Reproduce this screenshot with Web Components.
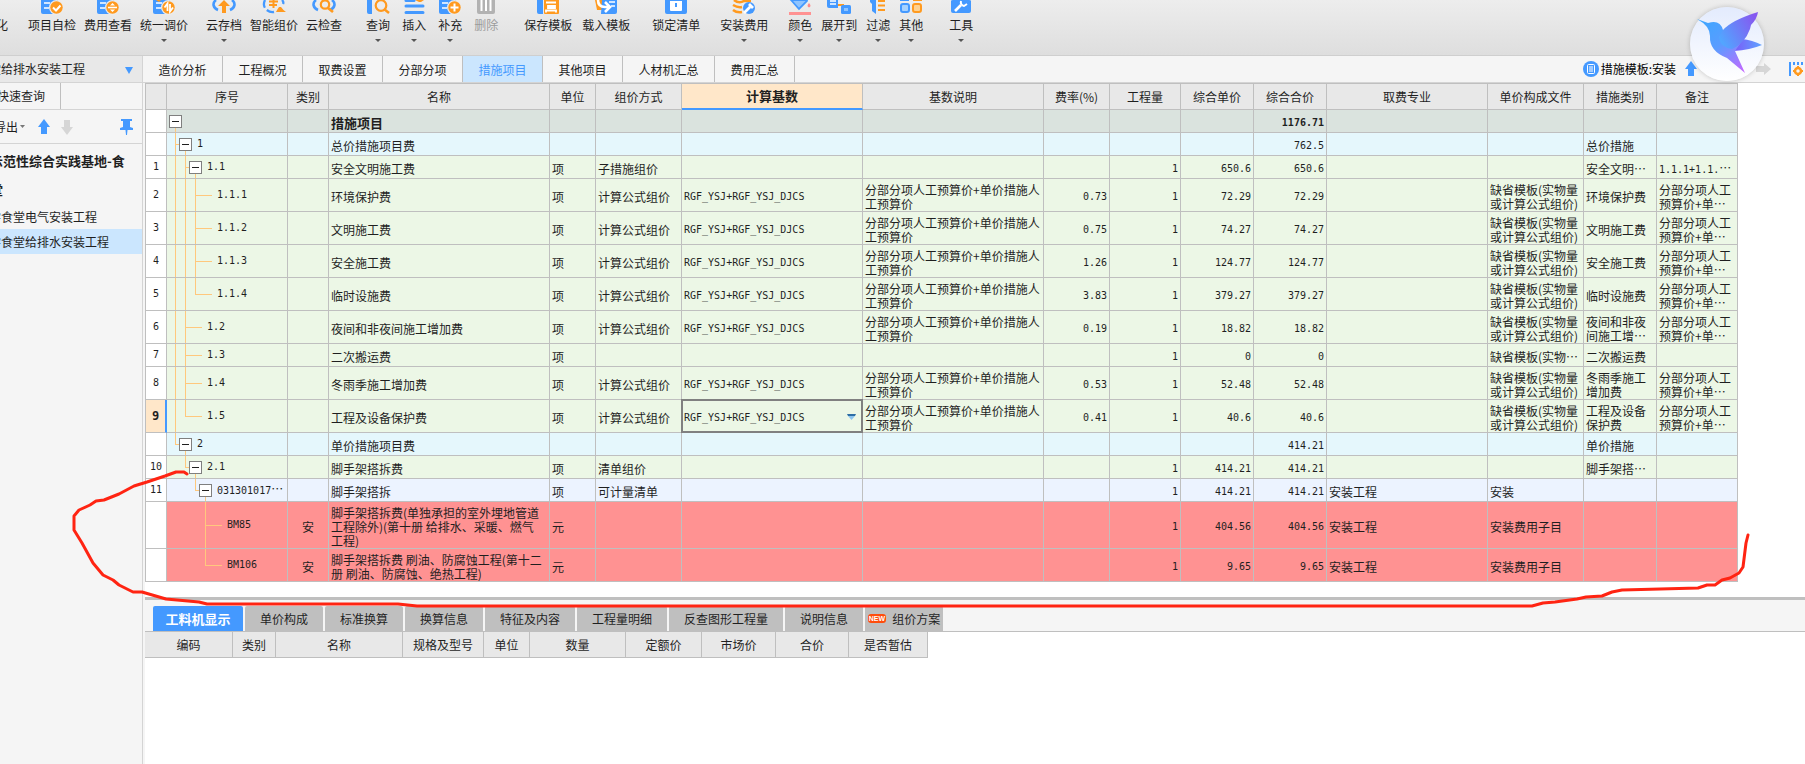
<!DOCTYPE html>
<html lang="zh-CN">
<head>
<meta charset="utf-8">
<title>措施项目</title>
<style>
html,body{margin:0;height:100%;overflow:hidden}
body{font:12px/14px "Noto Sans CJK SC","Liberation Sans",sans-serif;color:#1f1f1f;background:#fff}
</style>
</head>
<body>
<cost-app></cost-app>
<script>
const B='#4499ff',O='#ff9a1f',G='#b2b2b2';
const base='*{box-sizing:border-box}button,select{font:inherit;color:inherit;background:none;border:0;margin:0;padding:0;border-radius:0;cursor:pointer}svg{display:block}';
const define=(name,css,html)=>customElements.define(name,class extends HTMLElement{
  constructor(){super();this.attachShadow({mode:'open'}).innerHTML=`<style>${base}${css}</style>${typeof html==='function'?html(this):html}`}
});

/* Ribbon icons: the lower part of each 24px glyph, 16px tall */
const doc=`<path fill="${B}" d="M1 0h17v14H3q-2 0-2-2z"/><path stroke="#fff" stroke-width="1.6" d="M4 3h6M4 8h5"/>`;
const disc=`<circle cx="16.5" cy="7.5" r="7.5" fill="#ececec"/><circle cx="16.5" cy="7.5" r="6.2" fill="${O}"/>`;
const cloud=`<path fill="none" stroke="${B}" stroke-width="2.6" d="M4 0C0 3 1 8 6 10M20 0c4 3 3 8-2 10"/>`;
const icons={
check:doc+disc+`<path fill="none" stroke="#fff" stroke-width="2" d="M13 7.5l3 3 4.5-5"/>`,
fee:doc+disc+`<path stroke="#fff" stroke-width="1.6" d="M12 7.5h9"/><path fill="#fff" d="M14 5.5l2.500-2.500 2.500 2.500zM14 9.500h5L16.500 12z"/>`,
adjust:doc+`<path fill="${O}" d="M4 0h5L7 2z"/>`+disc+`<path fill="none" stroke="#fff" stroke-width="1.8" d="M15.500 11V3.500l-3 4M18 4v7.500l3-4"/>`,
cloudup:cloud+`<path fill="${O}" d="M12 0l6 6h-4v7h-4V6H6z"/>`,
smart:`<path fill="none" stroke="${B}" stroke-width="2.300" stroke-dasharray="8 3" d="M3 0c-4 8 4 13 9 12"/><path fill="none" stroke="${B}" stroke-width="2.300" d="M20 0q2 2 1 4"/><path fill="none" stroke="${O}" stroke-width="2" d="M7 1.500h9M7 5h8M11.500 0v8"/><path fill="${O}" d="M14 12q1-2 3-5h2q2 3 5 5z"/>`,
cloudfind:cloud+`<circle cx="13" cy="4.500" r="4.200" fill="none" stroke="${O}" stroke-width="2.200"/><path stroke="${O}" stroke-width="2.600" d="M16 8l5 4"/>`,
find:`<path fill="${B}" d="M1 0h5v14H3q-2 0-2-2z"/><circle cx="15" cy="5.500" r="5.300" fill="none" stroke="${O}" stroke-width="2.200"/><path stroke="${O}" stroke-width="2.400" d="M18 9l5 4"/>`,
insert:`<path fill="${O}" d="M13 0h9l-3 2h-2z"/><path stroke="${B}" stroke-width="3" stroke-linecap="round" d="M4 .5h8M4 6h17M4 12.500h17"/>`,
add:doc+disc+`<path stroke="#fff" stroke-width="2" d="M12.500 7.500h8M16.500 3.500v8"/>`,
del:`<path fill="${G}" d="M3 0h18v12q0 2-2 2H5q-2 0-2-2z"/><path stroke="#fff" stroke-width="2" d="M7.500 0v11M12 0v11M16.500 0v11"/>`,
save:`<path fill="${B}" d="M1 0h6v14H3q-2 0-2-2z"/><rect x="8" y="-2" width="15" height="16" rx="1" fill="${O}"/><path fill="none" stroke="#fff" stroke-width="1.800" d="M10 2.500h10M12 8v-2h7v2zM10 12.500v-2h10v2"/>`,
load:`<path fill="${O}" d="M1 0h8v10H3z"/><path fill="${B}" d="M8 0h15v12q0 2-2 2H7z"/><path stroke="#fff" stroke-width="1.500" d="M15 2h6M17 6h4"/><path fill="none" stroke="#fff" stroke-width="2.600" d="M4 0q0 7 7 7h4M11 2l5 5-5 5"/>`,
lock:`<path fill="${B}" d="M1 0h22v12q0 2-2 2H3q-2 0-2-2z"/><path fill="#fff" d="M6 1h12v9q0 1-1 1H7q-1 0-1-1z"/><path stroke="${B}" stroke-width="2" d="M12 3v4"/>`,
install:`<path fill="none" stroke="${O}" stroke-width="2.600" d="M2 0q5 4 10 1h7M1 5q5 3 9 2M1 10q4 3 9 2"/><circle cx="17" cy="8" r="6" fill="${B}"/><path stroke="#fff" stroke-width="2.800" d="M12 13l6-6M17 4l4 4"/>`,
color:`<path fill="#8fc4ff" stroke="${B}" stroke-width="1.800" d="M3 0l8 9 8-8V0z"/><path fill="#ff8a8a" d="M21 3q3 3 0 4.500Q18 6 21 3z"/><path fill="#ff9292" d="M1 12h22v3H1z"/>`,
expand:`<path stroke="${O}" stroke-width="2" d="M10 5h6v3" fill="none"/><path fill="${B}" d="M0 0h11v8H2Q0 8 0 6z"/><path stroke="#fff" stroke-width="1.500" d="M3 1h6M3 4h6"/><rect x="14" y="5" width="10" height="9" rx="1.500" fill="${B}"/><rect x="17" y="8" width="4" height="3" fill="#8fc4ff"/>`,
filter:`<path fill="${B}" d="M4 0h6v14l-4-3V4L4 2z"/><path stroke="${O}" stroke-width="2" d="M12 1h7M12 5.500h7M12 10h7"/>`,
other:`<path fill="${B}" d="M1 0h9v1H1z"/><path fill="${O}" d="M14 0h9v1h-9z"/><rect x="2" y="4" width="8" height="8" rx="2" fill="#a6d2ff" stroke="${B}" stroke-width="2"/><rect x="14" y="4" width="8" height="8" rx="2" fill="#ffd18f" stroke="${O}" stroke-width="2"/>`,
tool:`<path fill="${B}" d="M2 1q0-1 2-1h16q2 0 2 1v10q0 2-2 2H4q-2 0-2-2z"/><path stroke="#fff" stroke-width="2.600" d="M6 11l6-6"/><path fill="none" stroke="#fff" stroke-width="2" d="M12 1q-1 4 3 5l3-2"/>`
};

define('tool-button',
`:host{display:block}
button{display:flex;flex-direction:column;align-items:center;width:100%;white-space:nowrap}
button:disabled{color:#9b9b9b}
.label{height:18px;line-height:18px}
.blank{height:16px}
.arrow{width:6px;height:3px;margin-top:5px}`,
el=>`<button ${el.hasAttribute('disabled')?'disabled':''}>${el.hasAttribute('icon')?`<svg width="24" height="16" viewBox="0 0 24 16">${icons[el.getAttribute('icon')]}</svg>`:'<span class="blank"></span>'}
<span class="label"><slot></slot></span>${el.hasAttribute('menu')?'<svg class="arrow" viewBox="0 0 6 3"><path fill="#555" d="M0 0h6L3 3z"/></svg>':''}</button>`);

const groups=[
 [20,8,[['项目自检','check'],['费用查看','fee'],['统一调价','adjust',1]]],
 [18,8,[['云存档','cloudup',1],['智能组价','smart'],['云检查','cloudfind']]],
 [24,12,[['查询','find',1],['插入','insert',1],['补充','add',1],['删除','del',0,1]]],
 [26,10,[['保存模板','save'],['载入模板','load']]],
 [22,0,[['锁定清单','lock']]],
 [20,0,[['安装费用','install',1]]],
 [20,9,[['颜色','color',1],['展开到','expand',1],['过滤','filter',1],['其他','other',1]]],
 [26,0,[['工具','tool',1]]]];
define('ribbon-bar',
`:host{display:flex;align-items:flex-start;height:56px;overflow:hidden;background:linear-gradient(#ededed,#dedede);border-bottom:1px solid #cfcfcf}
.first{margin-left:-4px}
.group{display:flex}`,
`<tool-button class="first">化</tool-button>`+groups.map(([m,g,l])=>`<div class="group" style="margin-left:${m}px;gap:${g}px">${l.map(([t,i,a,d])=>`<tool-button icon="${i}"${a?' menu':''}${d?' disabled':''}>${t}</tool-button>`).join('')}</div>`).join(''));

define('side-panel',
`:host{display:flex;flex-direction:column;width:143px;background:#f5f5f5;border-right:1px solid #d4d4d4;overflow:hidden}
.pick{position:relative;display:flex;height:27px;background:#e8e8e8;border-bottom:1px solid #d4d4d4}
.pick select{appearance:none;width:100%;margin-left:-11px;padding-right:20px;outline:0}
.pick svg{position:absolute;right:9px;top:11px}
.find{display:flex;height:27px;border-bottom:1px solid #d4d4d4}
.find button{width:64px;margin-left:-3px;border-right:1px solid #bfbfbf;text-align:left}
.tools{display:flex;align-items:center;height:34px;border-bottom:1px solid #d4d4d4;padding-right:9px}
.tools .out{display:flex;align-items:center;gap:2px;margin:0 13px 0 -6px}
.tools .pin{margin-left:auto}
.tools .down{margin-left:11px}
ul{list-style:none;margin:0;padding:2px 0 0}
li{height:25px;line-height:25px;white-space:nowrap}
li button{width:100%;height:25px;text-align:left;text-indent:-11px;display:block}
li.top{font-size:13px;font-weight:700;height:29px;line-height:29px;text-indent:-10px}
li.on{background:#cbe6fe}`,
`<div class="pick"><select aria-label="单位工程"><option>堂给排水安装工程</option></select><svg width="8" height="7"><path fill="${B}" d="M0 0h8L4 7z"/></svg></div>
<div class="find"><button>快速查询</button></div>
<div class="tools"><button class="out">导出<svg width="5" height="3"><path fill="#777" d="M0 0h5L2.500 3z"/></svg></button>
<button aria-label="上移"><svg width="12" height="16"><path fill="${B}" d="M6 0l6 8H9v7H3V8H0z"/></svg></button>
<button class="down" aria-label="下移"><svg width="12" height="16"><path fill="#d6d6d6" d="M6 16l6-8H9V1H3v7H0z"/></svg></button>
<button class="pin" aria-label="固定"><svg width="13" height="16"><path fill="${B}" d="M1 0h11v2h-2v6l3 1v2H7.500l-.5 5h-1l-.5-5H0V9l3-1V2H1z"/></svg></button></div>
<ul><li class="top">示范性综合实践基地-食</li><li class="top">堂</li><li><button>学食堂电气安装工程</button></li><li class="on"><button>学食堂给排水安装工程</button></li></ul>`);

define('nav-tabs',
`:host{display:flex;height:27px;background:#f5f5f5;border-bottom:1px solid #d4d4d4}
button{width:80px;border-right:1px solid #bfbfbf;white-space:nowrap;padding-top:1px}
button.wide{width:92px}
button.on{background:#cbe6fe;color:${B}}
.right{display:flex;align-items:center;margin-left:auto;padding-right:2px}
.right .name{margin:0 9px 0 2px;color:#000}
.next{margin:0 18px 0 59px}`,
['造价分析','工程概况','取费设置','分部分项','措施项目','其他项目','人材机汇总','费用汇总'].map(t=>`<button class="${t==='措施项目'?'on':t.length>4?'wide':''}">${t}</button>`).join('')+
`<div class="right"><svg width="16" height="16"><circle cx="8" cy="8" r="8" fill="${B}"/><rect x="4.500" y="3.500" width="7" height="9" rx="1" fill="none" stroke="#fff"/><path stroke="#fff" d="M6 6h4M6 8h4M6 10h4"/></svg><span class="name">措施模板:安装</span>
<svg width="12" height="16"><path fill="${B}" d="M6 0l6 8H9v7H3V8H0z"/></svg>
<svg class="next" width="15" height="12"><path fill="#d6d6d6" d="M15 6L8 0v3H0v6h8v3z"/></svg>
<svg width="14" height="16"><path stroke="${B}" stroke-width="2" d="M1 1v14M5 1v3M9 1v3M13 1v3"/><circle cx="9" cy="10" r="3" fill="none" stroke="${O}" stroke-width="2.500"/><path stroke="${O}" stroke-width="2" d="M9 5v2M9 13v2M4 10h2M12 10h2"/></svg></div>`);

/* Main grid */
const widths=[21,121,41,221,46,86,181,181,66,71,73,73,161,96,73,81];
const heads=['','序号','类别','名称','单位','组价方式','计算基数','基数说明','费率(%)','工程量','综合单价','综合合价','取费专业','单价构成文件','措施类别','备注'];
const RG='RGF_YSJ+RGF_YSJ_DJCS',DE='分部分项人工预算价+单价措施人<br>工预算价',TP='缺省模板(实物量<br>或计算公式组价)',NT='分部分项人工<br>预算价+单…',FM='计算公式组价';
/* Tree spec: [level, kind, continuing guides, closing guide] */
const rows=[
['root',23,'',[0,'box',[],-1],'','','措施项目','','','','','','','','1176.71'],
['sec',23,'',[1,'box',[0],-1],'1','','总价措施项目费','','','','','','','','762.5','','','总价措施',''],
['item',23,'1',[2,'box',[0,1],-1],'1.1','','安全文明施工费','项','子措施组价','','','','1','650.6','650.6','','','安全文明…','<i>1.1.1+1.1.</i>…'],
['item',33,'2',[3,'leaf',[0,1,2],-1],'1.1.1','','环境保护费','项',FM,RG,DE,'0.73','1','72.29','72.29','',TP,'环境保护费',NT],
['item',33,'3',[3,'leaf',[0,1,2],-1],'1.1.2','','文明施工费','项',FM,RG,DE,'0.75','1','74.27','74.27','',TP,'文明施工费',NT],
['item',33,'4',[3,'leaf',[0,1,2],-1],'1.1.3','','安全施工费','项',FM,RG,DE,'1.26','1','124.77','124.77','',TP,'安全施工费',NT],
['item',33,'5',[3,'leaf',[0,1],2],'1.1.4','','临时设施费','项',FM,RG,DE,'3.83','1','379.27','379.27','',TP,'临时设施费',NT],
['item',33,'6',[2,'leaf',[0,1],-1],'1.2','','夜间和非夜间施工增加费','项',FM,RG,DE,'0.19','1','18.82','18.82','',TP,'夜间和非夜<br>间施工增…',NT],
['item',23,'7',[2,'leaf',[0,1],-1],'1.3','','二次搬运费','项','','','','','1','0','0','','缺省模板(实物…','二次搬运费',''],
['item',33,'8',[2,'leaf',[0,1],-1],'1.4','','冬雨季施工增加费','项',FM,RG,DE,'0.53','1','52.48','52.48','',TP,'冬雨季施工<br>增加费',NT],
['item cur',33,'9',[2,'leaf',[0],1],'1.5','','工程及设备保护费','项',FM,RG,DE,'0.41','1','40.6','40.6','',TP,'工程及设备<br>保护费',NT],
['sec',23,'',[1,'box',[],0],'2','','单价措施项目费','','','','','','','','414.21','','','单价措施',''],
['item',23,'10',[2,'box',[],1],'2.1','','脚手架搭拆费','项','清单组价','','','','1','414.21','414.21','','','脚手架搭…',''],
['list',23,'11',[3,'box',[],2],'031301017<b>…</b>','','脚手架搭拆','项','可计量清单','','','','1','414.21','414.21','安装工程','安装','',''],
['warn',47,'',[4,'leaf',[3],-1],'BM85','安','脚手架搭拆费(单独承担的室外埋地管道<br>工程除外)(第十册 给排水、采暖、燃气<br>工程)','元','','','','','1','404.56','404.56','安装工程','安装费用子目','',''],
['warn',33,'',[4,'leaf',[],3],'BM106','安','脚手架搭拆费 刷油、防腐蚀工程(第十二<br>册 刷油、防腐蚀、绝热工程)','元','','','','','1','9.65','9.65','安装工程','安装费用子目','','']];
const guide=([lv,kind,full,last])=>{
  const g=[],c='linear-gradient(#ffc87d,#ffc87d)',x=k=>8+10*k;
  full.forEach(k=>g.push(`${c} ${x(k)}px 0/1px 100% no-repeat`));
  if(last>=0)g.push(`${c} ${x(last)}px 0/1px 50% no-repeat`);
  if(lv)g.push(`${c} ${x(lv-1)}px 50%/${kind==='box'?4:17}px 1px no-repeat`);
  if(kind==='box')g.push(`${c} ${x(lv)}px 100%/1px 50% no-repeat`);
  return g.join(',');
};
const cell=(v,i,cur)=>{
  if(i===6&&cur)return `<td class="mono edit"><select aria-label="计算基数"><option>${v}</option></select><svg width="9" height="6"><path fill="#2d6ea5" d="M0 0h9L8 2H1z"/><path fill="#8cc4ee" d="M1 2h7L4.500 6z"/></svg></td>`;
  const k=i===2?'mid':i===6?'mono':i>=8&&i<=11?'mono num':'';
  return `<td class="${k}">${v||''}</td>`;
};
define('cost-grid',
`:host{display:block;background:#fff;padding-bottom:15px}
table{border-collapse:separate;border-spacing:0;table-layout:fixed;width:1593px;border:1px solid #bfbfbf;border-width:1px 0 0 1px}
th,td{border:1px solid #bfbfbf;border-width:0 1px 1px 0;padding:4px 2px 0;white-space:nowrap;overflow:hidden;text-align:left}
thead th{height:26px;background:#e8e8e8;font-weight:400;text-align:center;padding:0}
thead th.calc{background:#ffe7c9;font-weight:700;font-size:13px;border-bottom:2px solid ${B}}
tbody th{background:#fff;font-weight:400;text-align:center;padding:0}
tbody th,.mono,.code,i{font-family:"DejaVu Sans Mono","Noto Sans CJK SC",monospace;font-size:10px;font-style:normal}
.code b{font:400 12px/14px "Noto Sans CJK SC",sans-serif}
.num{text-align:right}.mid{text-align:center}
tr{--bg:#ecf7e6}
tr.root{--bg:#dae3de;font-weight:700}
tr.root td:nth-child(4){font-size:13px}
tr.sec{--bg:#e5f7fc}tr.list{--bg:#ecf3ff}tr.warn{--bg:#ff9292}
td{background-color:var(--bg)}
tr.cur th{background:#ffe7c9;font-weight:700;font-size:12px;border-right:2px solid ${B}}
td.tree{padding:0}
.node{display:flex;align-items:center}
.node button{width:13px;height:13px;flex:none;background:#fff;border:1px solid #7f7f7f;display:grid;place-items:center;margin-right:5px}
.node button::before{content:"";width:7px;height:1px;background:#1f1f1f}
td.edit{position:relative;overflow:visible}
td.edit::after{content:"";position:absolute;inset:-1px;border:2px solid #808080;pointer-events:none}
td.edit select{appearance:none;width:100%;outline:0}
td.edit svg{position:absolute;right:6px;top:14px}`,
`<table><colgroup>${widths.map(w=>`<col style="width:${w}px">`).join('')}</colgroup>
<thead><tr>${heads.map(h=>`<th class="${h==='计算基数'?'calc':''}">${h}</th>`).join('')}</tr></thead>
<tbody>${rows.map(r=>{const [cls,h,n,t,code,...rest]=r;while(rest.length<14)rest.push('');
return `<tr class="${cls}" style="height:${h}px"><th>${n}</th><td class="tree" style="background:${guide(t)},var(--bg)"><div class="node" style="padding-left:${t[0]*10+(t[1]==='box'?2:20)}px">${t[1]==='box'?'<button aria-label="折叠"></button>':''}<span class="code">${code}</span></div></td>${rest.map((v,i)=>cell(v,i+2,cls==='item cur')).join('')}</tr>`}).join('')}</tbody></table>`);

const btabs=[['工料机显示',90],['单价构成',78],['标准换算',78],['换算信息',78],['特征及内容',90],['工程量明细',90],['反查图形工程量',114],['说明信息',78],['组价方案',78]];
const bcols=[['编码',88],['类别',43],['名称',127],['规格及型号',81],['单位',46],['数量',96],['定额价',76],['市场价',74],['合价',73],['是否暂估',79]];
define('detail-panel',
`:host{display:flex;flex-direction:column;flex:1;border-top:3px solid #bfbfbf}
.tabs{display:flex;gap:2px;padding:6px 0 0 8px;background:#f5f5f5;border-bottom:1px solid #bfbfbf}
.tabs button{height:25px;background:#bfbfbf;border-radius:2px 2px 0 0;display:flex;align-items:center;justify-content:center;gap:6px;white-space:nowrap}
.tabs button.on{background:${B};color:#fff;font-weight:700;font-size:13px}
.new{font:700 7px/9px "Liberation Sans",sans-serif;background:#ff4d0d;color:#fff;border-radius:3px;padding:0 1px}
table{border-collapse:separate;border-spacing:0;table-layout:fixed;width:783px}
th{height:26px;padding:0;background:#e8e8e8;font-weight:400;border:1px solid #bfbfbf;border-width:0 1px 1px 0}`,
`<div class="tabs">${btabs.map(([t,w],i)=>`<button class="${i?'':'on'}" style="width:${w}px">${i===8?'<span class="new">NEW</span>':''}${t}</button>`).join('')}</div>
<table><colgroup>${bcols.map(c=>`<col style="width:${c[1]}px">`).join('')}</colgroup><thead><tr>${bcols.map(c=>`<th>${c[0]}</th>`).join('')}</tr></thead></table>`);

define('bird-badge',
`:host{display:block;width:74px;height:74px;border-radius:50%;background:linear-gradient(#e3ebfd,#fff);box-shadow:0 0 5px #0003}`,
`<svg width="74" height="74" viewBox="0 0 74 74"><defs><linearGradient id="a" gradientUnits="userSpaceOnUse" x1="12" y1="14" x2="54" y2="66"><stop offset="0" stop-color="#3fa6ff"/><stop offset=".45" stop-color="#5a9cff"/><stop offset="1" stop-color="#c866ff"/></linearGradient><linearGradient id="w" gradientUnits="userSpaceOnUse" x1="26" y1="34" x2="66" y2="12"><stop offset=".1" stop-color="#52a6ff"/><stop offset="1" stop-color="#8658f0"/></linearGradient><linearGradient id="t"><stop offset="0" stop-color="#7a5cf8"/><stop offset="1" stop-color="#5fa4ff"/></linearGradient></defs>
<path fill="url(#t)" d="M52 32Q62 33 72 38 60 43 44 44z"/>
<path fill="url(#a)" d="M7 12L18 16Q30 12 33 23L54 31 45 44 55 66 37 51Q19 44 20 29 20 19 7 12z"/>
<path fill="url(#w)" d="M33 23Q42 13 68 5 67 12 61 18L60 22Q55 36 42 42 30 40 29 30z"/></svg>`);

/* Free-hand red marker stroke */
define('ink-mark',
`:host{position:absolute;inset:0;pointer-events:none}svg{width:100%;height:100%;overflow:visible}`,
`<svg><path fill="none" stroke="#ff2412" stroke-width="3" stroke-linejoin="round" stroke-linecap="round" d="M187 474L184 472H176L165 476 147 482 134 486 119 494 104 500 96 501 90 505 79 510 74 516V530L82 543 93 563 103 575 113 580 119 585 133 592 142 592 166 599 199 602 207 604H398L417 606H1532L1543 603 1555 602 1577 599 1586 597 1602 596 1612 592 1622 590 1698 588 1707 585H1715L1722 580 1730 578 1739 573 1743 567 1746 543 1748 535"/></svg>`);

define('cost-app',
`:host{display:flex;flex-direction:column;position:relative;min-height:100vh}
.body{display:flex;flex:1;min-width:0}
main{flex:1;min-width:0;display:flex;flex-direction:column}
.work{flex:1;display:flex;flex-direction:column;border-left:2px solid #f5f5f5;background:#fff}
bird-badge{position:absolute;top:7px;right:41px}`,
`<ribbon-bar></ribbon-bar><div class="body"><side-panel></side-panel><main><nav-tabs></nav-tabs><div class="work"><cost-grid></cost-grid><detail-panel></detail-panel></div></main></div><bird-badge></bird-badge><ink-mark></ink-mark>`);
</script>
</body>
</html>
